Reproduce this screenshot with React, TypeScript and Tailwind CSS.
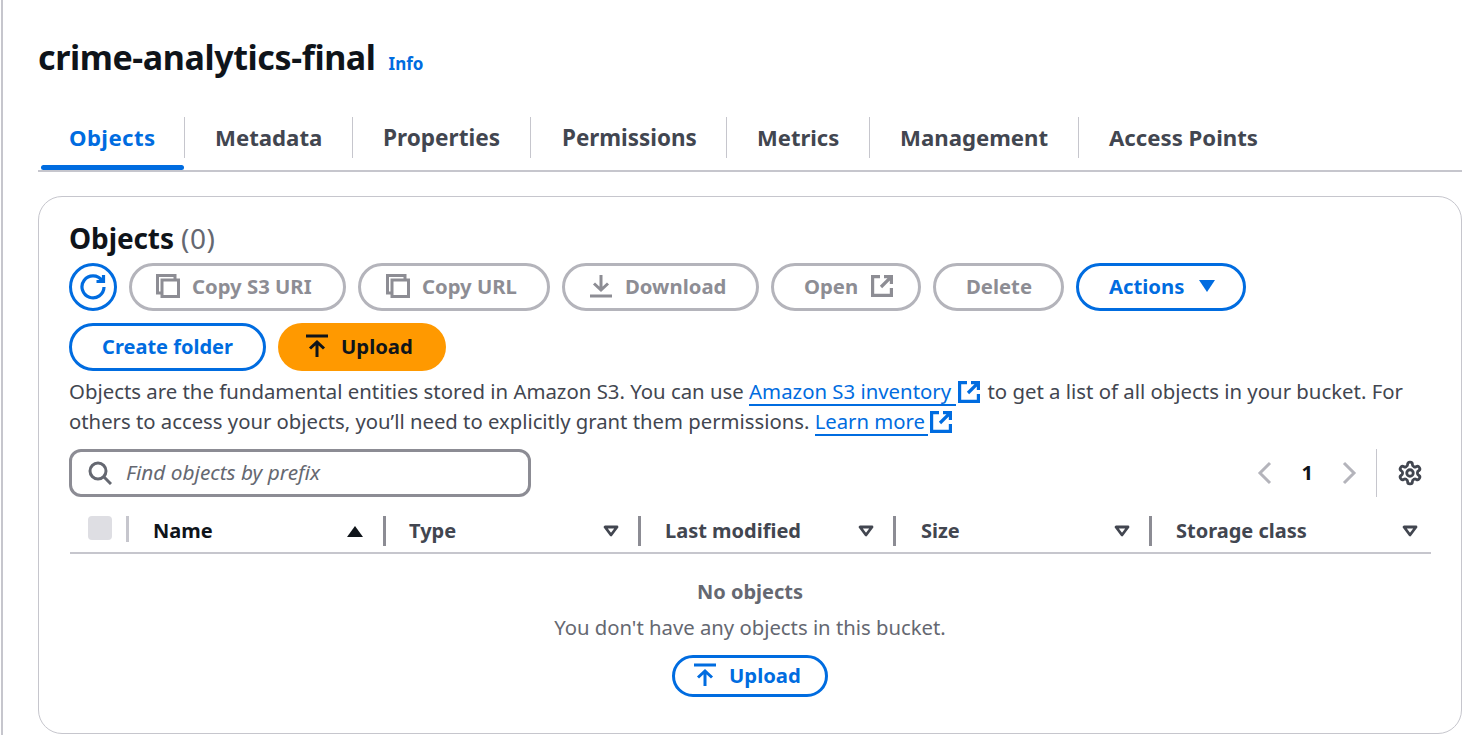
import React from "react";

const Copy = () => (
  <svg width="24" height="24" viewBox="0 0 24 24" fill="none" stroke="currentColor" strokeWidth="3" className="shrink-0">
    <path d="M5 19H1.5V1.5H19V5" />
    <rect x="6" y="6" width="16.5" height="16.5" />
  </svg>
);
const External = ({ size = 22 }: { size?: number }) => (
  <svg width={size} height={size} viewBox="0 0 22 22" fill="none" stroke="currentColor" strokeWidth="3.2" className="shrink-0">
    <path d="M9 1.6H1.6V20.4H20.4V13" />
    <path d="M13 1.6H20.4V9M20.4 1.6L10 12" />
  </svg>
);
const UploadIcon = () => (
  <svg width="22" height="24" viewBox="0 0 22 24" fill="none" stroke="currentColor" strokeWidth="3" className="shrink-0">
    <path d="M0 2H22M11 23V8M4 14.5L11 8L18 14.5" />
  </svg>
);
const Caret = ({ className = "" }: { className?: string }) => (
  <svg width="16" height="12" viewBox="0 0 16 12" fill="none" stroke="currentColor" strokeWidth="2.8" strokeLinejoin="round" className={className}>
    <path d="M2 2H14L8 10Z" />
  </svg>
);

const pill = "flex h-12 items-center rounded-full border-[3px] text-[20.3px] font-bold";
const disabled = `${pill} pb-[2px] border-[#b4b4bb] text-[#8d8d94]`;
const blue = `${pill} border-[#006ce0] text-[#006ce0]`;

const tabs: [string, string][] = [
  ["Objects", "ml-[3px] w-[144px] pl-[28px] text-[22.2px] tracking-[0.4px] text-[#006ce0]"],
  ["Metadata", "w-[168px] pl-[30px] text-[22.2px] text-[#424650]"],
  ["Properties", "w-[178px] pl-[30px] text-[22.6px] text-[#424650]"],
  ["Permissions", "w-[196px] pl-[31px] text-[22.4px] text-[#424650]"],
  ["Metrics", "w-[143px] pl-[30px] text-[22px] text-[#424650]"],
  ["Management", "w-[209px] pl-[30px] text-[22.2px] text-[#424650]"],
  ["Access Points", "w-[210px] pl-[30px] text-[22.2px] text-[#424650]"],
];

const Col = ({ label, width, pad }: { label: string; width: string; pad: string }) => (
  <div className={`flex h-[30px] shrink-0 items-center justify-between border-l-[3px] border-[#8c8c94] ${pad} ${width}`}>
    <span className="text-[20px] font-bold text-[#424650]">{label}</span>
    <Caret className="text-[#424650]" />
  </div>
);

export default function App() {
  return (
    <div className="h-[735px] w-[1471px] overflow-hidden bg-white font-['Noto_Sans',sans-serif] text-[#0f141a]">
      <div className="ml-[1px] h-full w-[1461px] border-l-2 border-[#c6c6cd] pl-[35px]">
        <div className="flex h-[117px] items-start pt-[33px]">
          <h1 className="text-[34px] leading-[48px] font-bold tracking-[-0.4px]">crime-analytics-final</h1>
          <span className="ml-[13px] mt-[19px] text-[17px] leading-[24px] font-bold text-[#006ce0]">Info</span>
        </div>
        <div className="flex h-[55px] border-b-2 border-[#c6c6cd]">
          {tabs.map(([t, c], i) => (
            <div key={t} className={`relative flex h-[41px] shrink-0 items-center font-bold ${c} ${i < tabs.length - 1 ? "border-r border-[#c6c6cd]" : ""}`}>
              {t}
              {i === 0 && <div className="absolute -bottom-[12px] left-0 h-[5px] w-[143px] rounded-sm bg-[#006ce0]" />}
            </div>
          ))}
        </div>
        <div className="mt-[24px] h-[538px] rounded-[24px] border border-[#c6c6cd] px-[30px] pt-[22px]">
          <div className="h-[44px] text-[28px] leading-[38px] font-bold tracking-[-0.1px]">
            Objects <span className="font-normal tracking-[0.5px] text-[#656871]">(0)</span>
          </div>
          <div className="flex gap-[12px]">
            <div className={`${blue} w-12 justify-center`}>
              <svg width="26" height="26" viewBox="0 0 26 26" fill="none" stroke="currentColor" strokeWidth="3.2">
                <path d="M22 6.5A11 11 0 1 0 24 13" />
                <path d="M23.5 1V7.5H16.5" />
              </svg>
            </div>
            <div className={`${disabled} w-[217px] gap-[12px] pl-[24px]`}><Copy />Copy S3 URI</div>
            <div className={`${disabled} w-[192px] gap-[12px] pl-[25px]`}><Copy />Copy URL</div>
            <div className={`${disabled} w-[197px] gap-[13px] pl-[25px]`}>
              <svg width="22" height="24" viewBox="0 0 22 24" fill="none" stroke="currentColor" strokeWidth="3" className="shrink-0">
                <path d="M0 22H22M11 1V16M4 9.5L11 16L18 9.5" />
              </svg>
              Download
            </div>
            <div className={`${disabled} w-[150px] gap-[13px] pl-[30px]`}>Open<External /></div>
            <div className={`${disabled} w-[131px] justify-center pl-[1px]`}>Delete</div>
            <div className={`${blue} w-[170px] gap-[15px] pb-[2px] pl-[30px]`}>
              Actions
              <svg width="16" height="12" viewBox="0 0 16 12" fill="currentColor"><path d="M0 0H16L8 12Z" /></svg>
            </div>
          </div>
          <div className="mt-[12px] flex gap-[12px]">
            <div className={`${blue} w-[197px] justify-center text-[20px]`}>Create folder</div>
            <div className="flex h-12 w-[168px] items-center gap-[13px] rounded-full bg-[#ff9900] pb-[2px] pl-[28px] text-[20.3px] font-bold text-[#0f141a]">
              <UploadIcon />Upload
            </div>
          </div>
          <p className="mt-[5px] h-[60px] text-[20.3px] leading-[30px] text-[#424650]">
            <span className="text-[20.38px]">
              Objects are the fundamental entities stored in Amazon S3. You can use{" "}
              <span className="inline-flex items-center pr-[2px] text-[#006ce0]">
                <span className="border-b-2 border-[#006ce0] pr-[5px] leading-[26px]">Amazon S3 inventory</span>
                <span className="ml-[2px]"><External /></span>
              </span>{" "}
              to get a list of all objects in your bucket. For
            </span>{" "}
            others to access your objects, you’ll need to explicitly grant them permissions.{" "}
            <span className="inline-flex items-center text-[#006ce0]">
              <span className="border-b-2 border-[#006ce0] pr-[3px] leading-[26px]">Learn more</span>
              <span className="ml-[2px]"><External /></span>
            </span>
          </p>
          <div className="mt-[13px] flex h-12 items-center justify-between">
            <div className="flex h-12 w-[462px] items-center gap-[14px] rounded-[12px] border-[3px] border-[#8c8c94] pl-[16px]">
              <svg width="24" height="24" viewBox="0 0 24 24" fill="none" stroke="#656871" strokeWidth="3">
                <circle cx="10" cy="10" r="8" />
                <path d="M16 16L23 23" />
              </svg>
              <span className="text-[20.8px] text-[#656871] italic">Find objects by prefix</span>
            </div>
            <div className="flex h-12 items-center">
              <svg width="16" height="24" viewBox="0 0 16 24" fill="none" stroke="#b4b4bb" strokeWidth="3"><path d="M13 2L3 12L13 22" /></svg>
              <span className="ml-[28px] mr-[28px] pb-[2px] text-[20.3px] font-bold">1</span>
              <svg width="16" height="24" viewBox="0 0 16 24" fill="none" stroke="#b4b4bb" strokeWidth="3"><path d="M3 2L13 12L3 22" /></svg>
              <div className="ml-[19px] mr-[20px] h-12 w-px bg-[#c6c6cd]" />
              <svg width="26" height="26" viewBox="0 0 24 24" fill="none" stroke="#424650" strokeWidth="2.6" strokeLinejoin="round" className="mr-[8px]">
                <path d="M12.22 2h-.44a2 2 0 0 0-2 2v.18a2 2 0 0 1-1 1.73l-.43.25a2 2 0 0 1-2 0l-.15-.08a2 2 0 0 0-2.73.73l-.22.38a2 2 0 0 0 .73 2.73l.15.1a2 2 0 0 1 1 1.72v.51a2 2 0 0 1-1 1.74l-.15.09a2 2 0 0 0-.73 2.73l.22.38a2 2 0 0 0 2.73.73l.15-.08a2 2 0 0 1 2 0l.43.25a2 2 0 0 1 1 1.73V20a2 2 0 0 0 2 2h.44a2 2 0 0 0 2-2v-.18a2 2 0 0 1 1-1.73l.43-.25a2 2 0 0 1 2 0l.15.08a2 2 0 0 0 2.73-.73l.22-.39a2 2 0 0 0-.73-2.73l-.15-.08a2 2 0 0 1-1-1.74v-.5a2 2 0 0 1 1-1.74l.15-.09a2 2 0 0 0 .73-2.73l-.22-.38a2 2 0 0 0-2.73-.73l-.15.08a2 2 0 0 1-2 0l-.43-.25a2 2 0 0 1-1-1.73V4a2 2 0 0 0-2-2z" />
                <circle cx="12" cy="12" r="3" />
              </svg>
            </div>
          </div>
          <div className="mt-[13px] ml-px flex h-[44px] items-start border-b-2 border-[#c6c6cd] pt-[6px]">
            <div className="ml-[18px] h-[24px] w-[24px] rounded-[4px] bg-[#dedee3]" />
            <div className="ml-[14px] h-[26px] w-[3px] bg-[#c6c6cd]" />
            <div className="flex h-[30px] w-[254px] shrink-0 items-center justify-between pl-[24px] pr-[20px]">
              <span className="text-[20px] font-bold">Name</span>
              <svg width="16" height="12" viewBox="0 0 16 12" fill="currentColor"><path d="M0 12H16L8 1Z" /></svg>
            </div>
            <Col label="Type" width="w-[255px]" pad="pl-[23px] pr-[19px]" />
            <Col label="Last modified" width="w-[255px]" pad="pl-[24px] pr-[19px]" />
            <Col label="Size" width="w-[256px]" pad="pl-[25px] pr-[19px]" />
            <Col label="Storage class" width="w-[282px]" pad="pl-[24px] pr-[13px]" />
          </div>
          <div className="flex flex-col items-center">
            <div className="mt-[23px] text-[20px] leading-[30px] font-bold text-[#656871]">No objects</div>
            <div className="mt-[5px] text-[20.3px] leading-[30px] text-[#656871]">You don't have any objects in this bucket.</div>
            <div className="mt-[13px] flex h-[42px] w-[156px] items-center gap-[13px] rounded-full border-[3px] border-[#006ce0] pb-[2px] pl-[19px] text-[20.3px] font-bold text-[#006ce0]">
              <UploadIcon />Upload
            </div>
          </div>
        </div>
      </div>
    </div>
  );
}
